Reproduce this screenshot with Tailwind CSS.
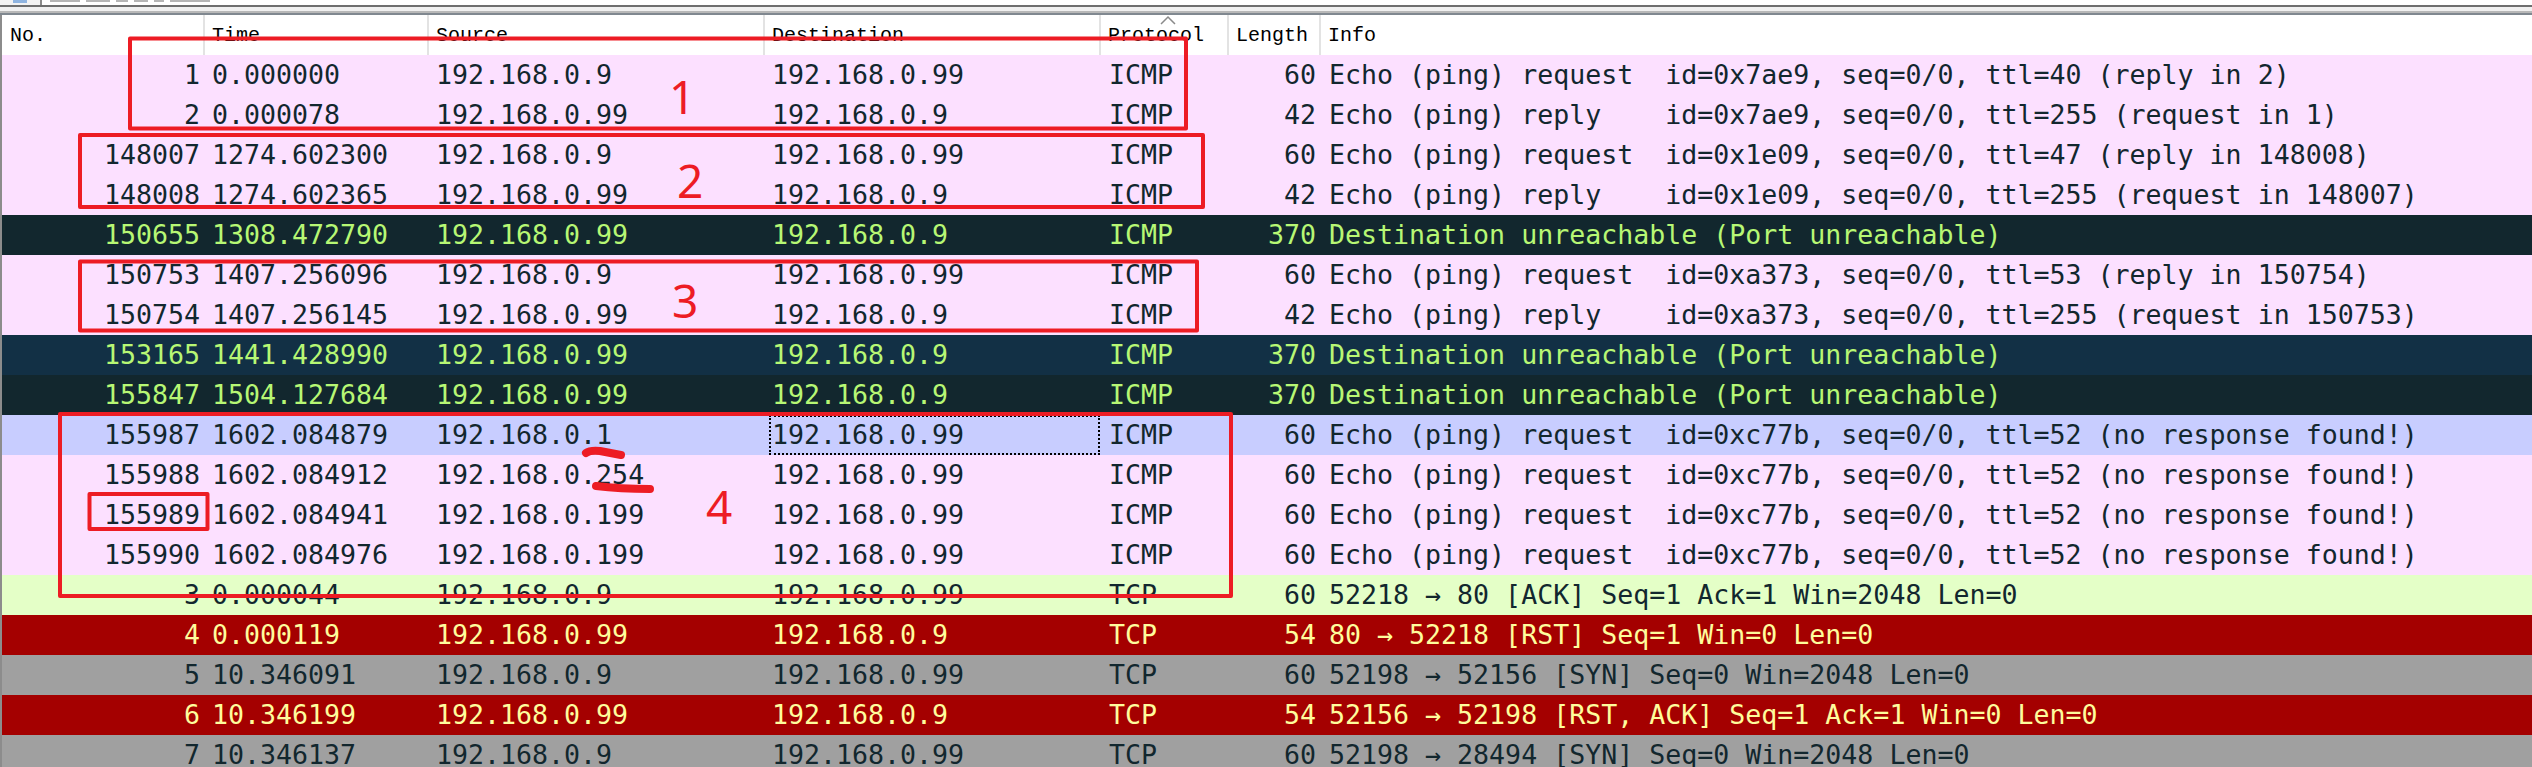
<!doctype html>
<html><head><meta charset="utf-8"><script src="https://cdn.jsdelivr.net/npm/@tailwindcss/browser@4"></script></head>
<body class="m-0 bg-white">
<div class="relative w-[2532px] h-[767px] overflow-hidden bg-white font-['DejaVu_Sans_Mono',monospace] text-[26.6px] text-[#12272e]">
  <div class="h-[5px] bg-white flex">
    <div class="w-[42px] h-full bg-[#f2f2f2] border-r-2 border-[#8a8a8a] flex justify-center"><div class="w-[14px] h-[3px] bg-[#8fb4e0]"></div></div>
    <div class="flex gap-[6px] pl-[8px] pt-0">
      <div class="w-[30px] h-[2px] bg-[#b5b5b5]"></div><div class="w-[24px] h-[2px] bg-[#b5b5b5]"></div><div class="w-[12px] h-[2px] bg-[#b5b5b5]"></div><div class="w-[14px] h-[2px] bg-[#b5b5b5]"></div><div class="w-[10px] h-[2px] bg-[#b5b5b5]"></div><div class="w-[40px] h-[2px] bg-[#b5b5b5]"></div>
    </div>
  </div>
  <div class="h-[2px] bg-[#6e6e6e]"></div>
  <div class="h-[4px] bg-[#f0f0f0]"></div>
  <div class="h-[2px] bg-[#b8b8b8]"></div>
  <div class="h-[2px] bg-[#808890]"></div>
  <div class="border-l-2 border-[#8c8c8c]">
    <div class="relative flex h-[40px] bg-white font-['Liberation_Mono',monospace] text-[20px] text-black leading-[42px]">
      <div class="w-[203px] pl-[8px] border-r-2 border-[#e3e3e3]">No.</div>
      <div class="w-[224px] pl-[7px] border-r-2 border-[#e3e3e3]">Time</div>
      <div class="w-[336px] pl-[7px] border-r-2 border-[#e3e3e3]">Source</div>
      <div class="w-[336px] pl-[7px] border-r-2 border-[#e3e3e3]">Destination</div>
      <div class="w-[128px] pl-[7px] border-r-2 border-[#e3e3e3]">Protocol</div>
      <div class="w-[92px] pl-[7px] border-r-2 border-[#e3e3e3]">Length</div>
      <div class="pl-[7px]">Info</div>
      <svg class="absolute left-[1157px] top-0 w-[18px] h-[10px]" viewBox="0 0 18 10"><path d="M2 9 L9 2 L16 9" fill="none" stroke="#8a8a8a" stroke-width="1.5"/></svg>
    </div>
    <div class="leading-[40px] [&_span]:whitespace-pre [&_span]:flex-none">
      <div class="flex h-[40px] bg-[#fce0ff]"><span class="w-[198px] text-right">1</span><span class="w-[236px] pl-[12px]">0.000000</span><span class="w-[333px]">192.168.0.9</span><span class="w-[331px] pl-[3px]">192.168.0.99</span><span class="w-[136px] pl-[9px]">ICMP</span><span class="w-[80px] text-right">60</span><span class="pl-[13px]">Echo (ping) request  id=0x7ae9, seq=0/0, ttl=40 (reply in 2)</span></div>
      <div class="flex h-[40px] bg-[#fce0ff]"><span class="w-[198px] text-right">2</span><span class="w-[236px] pl-[12px]">0.000078</span><span class="w-[333px]">192.168.0.99</span><span class="w-[331px] pl-[3px]">192.168.0.9</span><span class="w-[136px] pl-[9px]">ICMP</span><span class="w-[80px] text-right">42</span><span class="pl-[13px]">Echo (ping) reply    id=0x7ae9, seq=0/0, ttl=255 (request in 1)</span></div>
      <div class="flex h-[40px] bg-[#fce0ff]"><span class="w-[198px] text-right">148007</span><span class="w-[236px] pl-[12px]">1274.602300</span><span class="w-[333px]">192.168.0.9</span><span class="w-[331px] pl-[3px]">192.168.0.99</span><span class="w-[136px] pl-[9px]">ICMP</span><span class="w-[80px] text-right">60</span><span class="pl-[13px]">Echo (ping) request  id=0x1e09, seq=0/0, ttl=47 (reply in 148008)</span></div>
      <div class="flex h-[40px] bg-[#fce0ff]"><span class="w-[198px] text-right">148008</span><span class="w-[236px] pl-[12px]">1274.602365</span><span class="w-[333px]">192.168.0.99</span><span class="w-[331px] pl-[3px]">192.168.0.9</span><span class="w-[136px] pl-[9px]">ICMP</span><span class="w-[80px] text-right">42</span><span class="pl-[13px]">Echo (ping) reply    id=0x1e09, seq=0/0, ttl=255 (request in 148007)</span></div>
      <div class="flex h-[40px] bg-[#12272e] text-[#b7f774]"><span class="w-[198px] text-right">150655</span><span class="w-[236px] pl-[12px]">1308.472790</span><span class="w-[333px]">192.168.0.99</span><span class="w-[331px] pl-[3px]">192.168.0.9</span><span class="w-[136px] pl-[9px]">ICMP</span><span class="w-[80px] text-right">370</span><span class="pl-[13px]">Destination unreachable (Port unreachable)</span></div>
      <div class="flex h-[40px] bg-[#fce0ff]"><span class="w-[198px] text-right">150753</span><span class="w-[236px] pl-[12px]">1407.256096</span><span class="w-[333px]">192.168.0.9</span><span class="w-[331px] pl-[3px]">192.168.0.99</span><span class="w-[136px] pl-[9px]">ICMP</span><span class="w-[80px] text-right">60</span><span class="pl-[13px]">Echo (ping) request  id=0xa373, seq=0/0, ttl=53 (reply in 150754)</span></div>
      <div class="flex h-[40px] bg-[#fce0ff]"><span class="w-[198px] text-right">150754</span><span class="w-[236px] pl-[12px]">1407.256145</span><span class="w-[333px]">192.168.0.99</span><span class="w-[331px] pl-[3px]">192.168.0.9</span><span class="w-[136px] pl-[9px]">ICMP</span><span class="w-[80px] text-right">42</span><span class="pl-[13px]">Echo (ping) reply    id=0xa373, seq=0/0, ttl=255 (request in 150753)</span></div>
      <div class="flex h-[40px] bg-[#123045] text-[#b7f774]"><span class="w-[198px] text-right">153165</span><span class="w-[236px] pl-[12px]">1441.428990</span><span class="w-[333px]">192.168.0.99</span><span class="w-[331px] pl-[3px]">192.168.0.9</span><span class="w-[136px] pl-[9px]">ICMP</span><span class="w-[80px] text-right">370</span><span class="pl-[13px]">Destination unreachable (Port unreachable)</span></div>
      <div class="flex h-[40px] bg-[#12272e] text-[#b7f774]"><span class="w-[198px] text-right">155847</span><span class="w-[236px] pl-[12px]">1504.127684</span><span class="w-[333px]">192.168.0.99</span><span class="w-[331px] pl-[3px]">192.168.0.9</span><span class="w-[136px] pl-[9px]">ICMP</span><span class="w-[80px] text-right">370</span><span class="pl-[13px]">Destination unreachable (Port unreachable)</span></div>
      <div class="flex h-[40px] bg-[#c8cdff]"><span class="w-[198px] text-right">155987</span><span class="w-[236px] pl-[12px]">1602.084879</span><span class="w-[333px]">192.168.0.1</span><span class="w-[331px] pl-[1px] border-2 border-dotted border-black leading-[36px]">192.168.0.99</span><span class="w-[136px] pl-[9px]">ICMP</span><span class="w-[80px] text-right">60</span><span class="pl-[13px]">Echo (ping) request  id=0xc77b, seq=0/0, ttl=52 (no response found!)</span></div>
      <div class="flex h-[40px] bg-[#fce0ff]"><span class="w-[198px] text-right">155988</span><span class="w-[236px] pl-[12px]">1602.084912</span><span class="w-[333px]">192.168.0.254</span><span class="w-[331px] pl-[3px]">192.168.0.99</span><span class="w-[136px] pl-[9px]">ICMP</span><span class="w-[80px] text-right">60</span><span class="pl-[13px]">Echo (ping) request  id=0xc77b, seq=0/0, ttl=52 (no response found!)</span></div>
      <div class="flex h-[40px] bg-[#fce0ff]"><span class="w-[198px] text-right">155989</span><span class="w-[236px] pl-[12px]">1602.084941</span><span class="w-[333px]">192.168.0.199</span><span class="w-[331px] pl-[3px]">192.168.0.99</span><span class="w-[136px] pl-[9px]">ICMP</span><span class="w-[80px] text-right">60</span><span class="pl-[13px]">Echo (ping) request  id=0xc77b, seq=0/0, ttl=52 (no response found!)</span></div>
      <div class="flex h-[40px] bg-[#fce0ff]"><span class="w-[198px] text-right">155990</span><span class="w-[236px] pl-[12px]">1602.084976</span><span class="w-[333px]">192.168.0.199</span><span class="w-[331px] pl-[3px]">192.168.0.99</span><span class="w-[136px] pl-[9px]">ICMP</span><span class="w-[80px] text-right">60</span><span class="pl-[13px]">Echo (ping) request  id=0xc77b, seq=0/0, ttl=52 (no response found!)</span></div>
      <div class="flex h-[40px] bg-[#e4ffc7]"><span class="w-[198px] text-right">3</span><span class="w-[236px] pl-[12px]">0.000044</span><span class="w-[333px]">192.168.0.9</span><span class="w-[331px] pl-[3px]">192.168.0.99</span><span class="w-[136px] pl-[9px]">TCP</span><span class="w-[80px] text-right">60</span><span class="pl-[13px]">52218 → 80 [ACK] Seq=1 Ack=1 Win=2048 Len=0</span></div>
      <div class="flex h-[40px] bg-[#a40000] text-[#fffc9c]"><span class="w-[198px] text-right">4</span><span class="w-[236px] pl-[12px]">0.000119</span><span class="w-[333px]">192.168.0.99</span><span class="w-[331px] pl-[3px]">192.168.0.9</span><span class="w-[136px] pl-[9px]">TCP</span><span class="w-[80px] text-right">54</span><span class="pl-[13px]">80 → 52218 [RST] Seq=1 Win=0 Len=0</span></div>
      <div class="flex h-[40px] bg-[#a0a0a0]"><span class="w-[198px] text-right">5</span><span class="w-[236px] pl-[12px]">10.346091</span><span class="w-[333px]">192.168.0.9</span><span class="w-[331px] pl-[3px]">192.168.0.99</span><span class="w-[136px] pl-[9px]">TCP</span><span class="w-[80px] text-right">60</span><span class="pl-[13px]">52198 → 52156 [SYN] Seq=0 Win=2048 Len=0</span></div>
      <div class="flex h-[40px] bg-[#a40000] text-[#fffc9c]"><span class="w-[198px] text-right">6</span><span class="w-[236px] pl-[12px]">10.346199</span><span class="w-[333px]">192.168.0.99</span><span class="w-[331px] pl-[3px]">192.168.0.9</span><span class="w-[136px] pl-[9px]">TCP</span><span class="w-[80px] text-right">54</span><span class="pl-[13px]">52156 → 52198 [RST, ACK] Seq=1 Ack=1 Win=0 Len=0</span></div>
      <div class="flex h-[40px] bg-[#a0a0a0]"><span class="w-[198px] text-right">7</span><span class="w-[236px] pl-[12px]">10.346137</span><span class="w-[333px]">192.168.0.9</span><span class="w-[331px] pl-[3px]">192.168.0.99</span><span class="w-[136px] pl-[9px]">TCP</span><span class="w-[80px] text-right">60</span><span class="pl-[13px]">52198 → 28494 [SYN] Seq=0 Win=2048 Len=0</span></div>
    </div>
  </div>
  <svg class="absolute left-0 top-0 w-[2532px] h-[767px] pointer-events-none" viewBox="0 0 2532 767" fill="none" stroke="#ed1c24" stroke-width="4" stroke-linejoin="round">
    <rect x="130" y="38.5" width="1056" height="90"/>
    <rect x="80" y="135" width="1123" height="72"/>
    <rect x="80" y="261.5" width="1117" height="69"/>
    <rect x="60" y="414" width="1171" height="182"/>
    <rect x="89.5" y="494" width="118" height="35"/>
    <path d="M586 453 Q590 450 600 451 L621 455" stroke-width="8" stroke-linecap="round"/>
    <path d="M596 486 Q620 489 650 489" stroke-width="8" stroke-linecap="round"/>
  </svg>
  <span class="absolute left-[669px] top-[64px] font-['Noto_Sans',sans-serif] text-[46px] leading-[64px] text-[#ed1c24]">1</span>
  <span class="absolute left-[677px] top-[148px] font-['Noto_Sans',sans-serif] text-[46px] leading-[64px] text-[#ed1c24]">2</span>
  <span class="absolute left-[672px] top-[268px] font-['Noto_Sans',sans-serif] text-[46px] leading-[64px] text-[#ed1c24]">3</span>
  <span class="absolute left-[706px] top-[474px] font-['Noto_Sans',sans-serif] text-[46px] leading-[64px] text-[#ed1c24]">4</span>
</div>
</body></html>
